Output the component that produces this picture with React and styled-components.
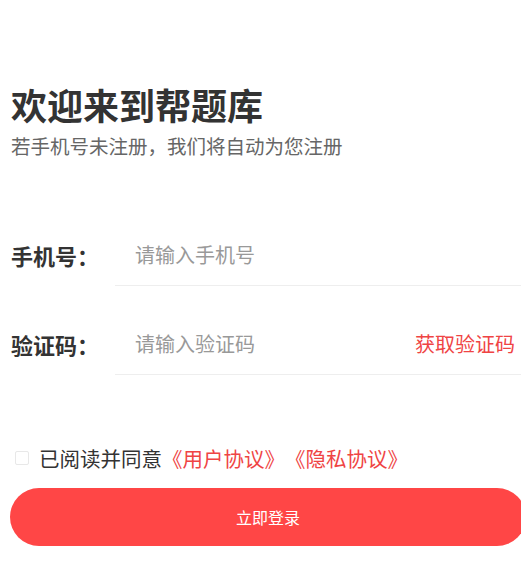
import React, { useState } from "react";
import styled, { createGlobalStyle } from "styled-components";

const GlobalStyle = createGlobalStyle`
  html, body {
    margin: 0;
    padding: 0;
    background: #fff;
    overflow-x: hidden;
  }
  body {
    font-family: "Noto Sans CJK SC", "Noto Sans", sans-serif;
    text-spacing-trim: space-all;
  }
`;

const App = () => {
  const [checked, setChecked] = useState(false);

  return (
    <Page>
      <GlobalStyle />
      <Title>欢迎来到帮题库</Title>
      <SubTitle>若手机号未注册，我们将自动为您注册</SubTitle>

      <Form>
        <Row>
          <Label>手机号：</Label>
          <Field>
            <Input placeholder="请输入手机号" />
          </Field>
        </Row>
        <Row mt="30px">
          <Label>验证码：</Label>
          <Field>
            <Input placeholder="请输入验证码" />
            <CodeBtn>获取验证码</CodeBtn>
          </Field>
        </Row>
      </Form>

      <Agree>
        <Check checked={checked} onClick={() => setChecked(!checked)} />
        <span>已阅读并同意</span>
        <LinkText>《用户协议》</LinkText>
        <LinkText>《隐私协议》</LinkText>
      </Agree>

      <LoginBtn>立即登录</LoginBtn>
    </Page>
  );
};

export default App;

const Page = styled.div`
  padding: 86px 0 0 11px;
  width: 521px;
  box-sizing: border-box;
`;

const Title = styled.h1`
  margin: 0;
  font-size: 36px;
  line-height: 36px;
  font-weight: 700;
  color: #333;
`;

const SubTitle = styled.p`
  margin: 14px 0 0;
  font-size: 19.5px;
  line-height: 20px;
  color: #666;
`;

const Form = styled.div`
  margin-top: 71px;
`;

const Row = styled.div`
  display: flex;
  align-items: stretch;
  margin-top: ${(props) => props.mt || 0};
`;

const Label = styled.div`
  width: 104px;
  flex-shrink: 0;
  display: flex;
  align-items: center;
  padding-bottom: 4px;
  font-size: 22px;
  font-weight: 700;
  color: #333;
`;

const Field = styled.div`
  flex: 1;
  height: 59px;
  box-sizing: border-box;
  display: flex;
  align-items: center;
  padding: 0 0 4px 20px;
  border-bottom: 1px solid #eee;
`;

const Input = styled.input`
  flex: 1;
  min-width: 0;
  border: none;
  outline: none;
  padding: 0;
  font-family: inherit;
  font-size: 20px;
  color: #333;
  background: transparent;
  &::placeholder {
    color: #999;
  }
`;

const CodeBtn = styled.span`
  font-size: 20px;
  color: #ef4444;
  margin-right: 6px;
  cursor: pointer;
`;

const Agree = styled.div`
  margin-top: 73px;
  display: flex;
  align-items: center;
  font-size: 20.5px;
  line-height: 20px;
  color: #333;
`;

const Check = styled.span`
  width: 12px;
  height: 12px;
  margin: 0 10px 0 4px;
  border: 1px solid #e8e8e8;
  border-radius: 2px;
  background: ${(props) => (props.checked ? "#ff4545" : "#fff")};
  cursor: pointer;
`;

const LinkText = styled.span`
  display: inline-block;
  color: #ef4444;
`;

const LoginBtn = styled.button`
  display: block;
  margin: 20px 0 0 -1px;
  width: 516px;
  height: 58px;
  border: none;
  border-radius: 29px;
  background: #ff4646;
  color: #fff;
  font-family: inherit;
  font-size: 16px;
  cursor: pointer;
`;
